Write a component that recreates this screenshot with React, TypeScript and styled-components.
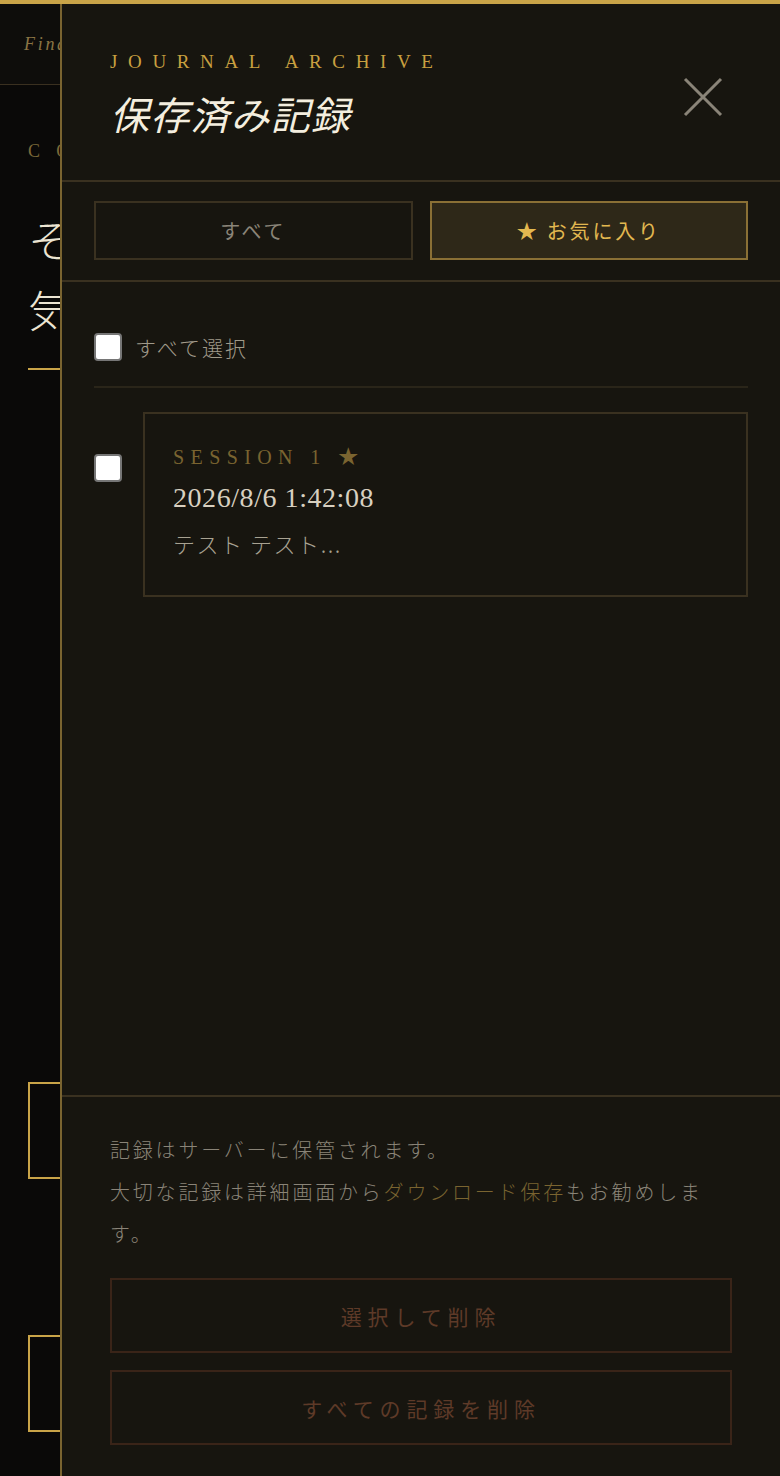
import React from "react";
import styled, { createGlobalStyle } from "styled-components";

const serif = `"Liberation Serif", "Noto Sans CJK JP", serif`;

const GlobalStyle = createGlobalStyle`
  html, body {
    margin: 0;
    padding: 0;
    background: #0a0908;
  }
  body {
    font-family: ${serif};
    overflow: hidden;
  }
  * { box-sizing: border-box; }
`;

const Page = styled.div`
  width: 780px;
  height: 1476px;
  border-top: 4px solid #c9a448;
  background: #0a0908;
  position: relative;
  overflow: hidden;
`;

/* page that sits behind the drawer */
const BackHeader = styled.header`
  height: 81px;
  background: #0e0d0b;
  border-bottom: 1px solid #3a3020;
  display: flex;
  align-items: center;
  padding: 0 24px;
`;

const BackBrand = styled.span`
  font-style: italic;
  font-size: 18px;
  letter-spacing: 0.15em;
  color: #8a7444;
  white-space: nowrap;
`;

const BackMain = styled.main`
  padding: 56px 28px 0;
  display: flex;
  flex-direction: column;
`;

const BackLabel = styled.div`
  font-size: 18px;
  letter-spacing: 0.9em;
  color: #7a6838;
  white-space: nowrap;
`;

const BackHeading = styled.h1`
  margin: 42px 0 0;
  font-family: "Noto Sans CJK JP", sans-serif;
  font-weight: 300;
  font-size: 44px;
  line-height: 70px;
  color: #ece4d2;
  white-space: nowrap;
`;

const BackRule = styled.div`
  width: 60px;
  height: 2px;
  margin-top: 24px;
  background: #c9a448;
`;

const BackBox = styled.div<{ $gap: number }>`
  height: 97px;
  width: 300px;
  margin-top: ${(p) => p.$gap}px;
  border: 2px solid #c9a448;
`;

/* drawer */
const Drawer = styled.aside`
  position: absolute;
  top: 0;
  right: 0;
  bottom: 0;
  width: 720px;
  background: #17150f;
  border-left: 2px solid #7a6430;
  display: flex;
  flex-direction: column;
`;

const DrawerHeader = styled.div`
  display: flex;
  justify-content: space-between;
  align-items: center;
  padding: 46px 56px 43px 48px;
  border-bottom: 2px solid #3a3120;
`;

const Eyebrow = styled.div`
  font-size: 19px;
  line-height: 24px;
  letter-spacing: 0.56em;
  color: #c9a040;
`;

const Title = styled.h2`
  margin: 15px 0 0;
  font-family: "Noto Sans CJK JP", sans-serif;
  font-weight: 400;
  font-style: italic;
  font-size: 39px;
  line-height: 48px;
  color: #f4eedf;
  letter-spacing: 0.03em;
`;

const CloseButton = styled.button`
  width: 42px;
  height: 42px;
  padding: 0;
  margin-top: 6px;
  border: none;
  background: none;
  display: flex;
  align-items: center;
  justify-content: center;
  cursor: pointer;
`;

const Tabs = styled.div`
  display: grid;
  grid-template-columns: 1fr 1fr;
  gap: 17px;
  padding: 19px 32px 20px;
  border-bottom: 2px solid #3a3120;
`;

const Tab = styled.button<{ $active?: boolean }>`
  height: 59px;
  font-family: "Noto Sans CJK JP", sans-serif;
  font-size: 20px;
  letter-spacing: 0.14em;
  color: ${(p) => (p.$active ? "#e2b850" : "#8a8478")};
  background: ${(p) => (p.$active ? "#2e2818" : "transparent")};
  border: 2px solid ${(p) => (p.$active ? "#8a7035" : "#3a3120")};
  cursor: pointer;
`;

const List = styled.div`
  flex: 1;
  padding: 50px 32px 0;
`;

const SelectAllRow = styled.label`
  display: flex;
  align-items: center;
  gap: 13px;
  padding-bottom: 24px;
  border-bottom: 2px solid #2a2519;
  font-family: "Noto Sans CJK JP", sans-serif;
  font-weight: 300;
  font-size: 21px;
  color: #a09a8a;
  letter-spacing: 0.1em;
`;

const Check = styled.input`
  appearance: none;
  width: 28px;
  height: 28px;
  margin: 0;
  flex-shrink: 0;
  background: #ffffff;
  border: 2px solid #767676;
  border-radius: 4px;
`;

const EntryRow = styled.div`
  display: flex;
  align-items: flex-start;
  gap: 21px;
  margin-top: 24px;

  ${Check} {
    margin-top: 42px;
  }
`;

const Card = styled.div`
  flex: 1;
  height: 185px;
  border: 2px solid #3a3120;
  padding: 30px 28px;
`;

const SessionLabel = styled.div`
  font-size: 20px;
  line-height: 26px;
  letter-spacing: 0.32em;
  color: #7a6430;
`;

const DateText = styled.div`
  margin-top: 11px;
  font-size: 28px;
  line-height: 34px;
  letter-spacing: 0.02em;
  color: #d8d0c0;
`;

const Preview = styled.div`
  margin-top: 13px;
  font-family: "Noto Sans CJK JP", sans-serif;
  font-weight: 300;
  font-size: 22px;
  line-height: 30px;
  letter-spacing: 0.07em;
  color: #a8a292;
`;

const Footer = styled.div`
  border-top: 2px solid #3a3120;
  padding: 32px 48px 31px;
  display: flex;
  flex-direction: column;
`;

const Note = styled.p`
  margin: 0;
  max-width: 612px;
  font-family: "Noto Sans CJK JP", sans-serif;
  font-weight: 300;
  font-size: 20px;
  line-height: 42px;
  letter-spacing: 0.14em;
  color: #8a8478;
`;

const Highlight = styled.span`
  color: #7a6430;
`;

const DangerButton = styled.button<{ $gap: number }>`
  height: 75px;
  margin-top: ${(p) => p.$gap}px;
  background: transparent;
  border: 2px solid #3a2418;
  font-family: "Noto Sans CJK JP", sans-serif;
  font-weight: 400;
  font-size: 21px;
  letter-spacing: 0.28em;
  color: #5e3a28;
  cursor: pointer;
`;

function CloseIcon() {
  return (
    <svg width="40" height="40" viewBox="0 0 40 40" fill="none">
      <path d="M2 2 L38 38 M38 2 L2 38" stroke="#8a8478" strokeWidth="3" />
    </svg>
  );
}

export default function App() {
  return (
    <>
      <GlobalStyle />
      <Page>
        <BackHeader>
          <BackBrand>Find your words</BackBrand>
        </BackHeader>
        <BackMain>
          <BackLabel>COMPOSE</BackLabel>
          <BackHeading>
            その日の記録を
            <br />
            気ままに綴る
          </BackHeading>
          <BackRule />
          <BackBox $gap={712} />
          <BackBox $gap={156} />
        </BackMain>

        <Drawer>
          <DrawerHeader>
            <div>
              <Eyebrow>JOURNAL ARCHIVE</Eyebrow>
              <Title>保存済み記録</Title>
            </div>
            <CloseButton aria-label="閉じる">
              <CloseIcon />
            </CloseButton>
          </DrawerHeader>

          <Tabs>
            <Tab>すべて</Tab>
            <Tab $active>★ お気に入り</Tab>
          </Tabs>

          <List>
            <SelectAllRow>
              <Check type="checkbox" />
              すべて選択
            </SelectAllRow>
            <EntryRow>
              <Check type="checkbox" />
              <Card>
                <SessionLabel>SESSION 1 ★</SessionLabel>
                <DateText>2026/8/6 1:42:08</DateText>
                <Preview>テスト テスト...</Preview>
              </Card>
            </EntryRow>
          </List>

          <Footer>
            <Note>
              記録はサーバーに保管されます。
              <br />
              大切な記録は詳細画面から<Highlight>ダウンロード保存</Highlight>
              もお勧めします。
            </Note>
            <DangerButton $gap={23}>選択して削除</DangerButton>
            <DangerButton $gap={17}>すべての記録を削除</DangerButton>
          </Footer>
        </Drawer>
      </Page>
    </>
  );
}
